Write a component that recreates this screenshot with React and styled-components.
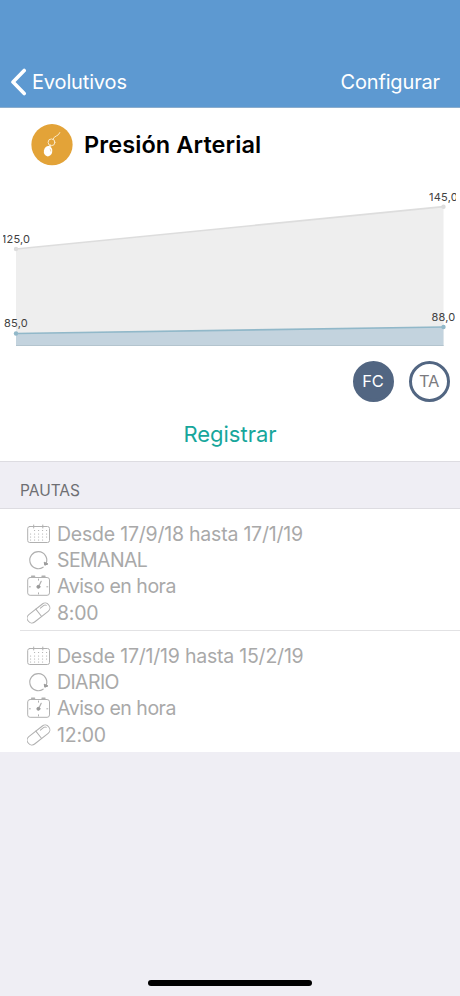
import styled, { createGlobalStyle } from 'styled-components';

const GlobalStyle = createGlobalStyle`
  * {
    box-sizing: border-box;
  }

  body {
    margin: 0;
    background: #efeef4;
    font-family: Inter, Roboto, "Liberation Sans", sans-serif;
  }

  svg {
    display: block;
    flex-shrink: 0;
  }
`;

const Screen = styled.div`
  width: 460px;
  height: 996px;
  display: flex;
  flex-direction: column;
  overflow: hidden;
  background: #efeef4;
`;

const NavBar = styled.header`
  height: 108px;
  padding: 56px 20px 0 10px;
  display: flex;
  justify-content: space-between;
  align-items: center;
  flex-shrink: 0;
  background: #5d99d1;
  border-bottom: 1px solid #8badcd;
`;

const NavButton = styled.button`
  display: flex;
  align-items: center;
  gap: 5px;
  padding: 0;
  border: 0;
  background: none;
  color: #fff;
  font: inherit;
  font-size: 20px;
  line-height: 26px;
  letter-spacing: -0.15px;
`;

const Panel = styled.section`
  height: 353px;
  flex-shrink: 0;
  display: flex;
  flex-direction: column;
  background: #fff;
`;

const Title = styled.h1`
  height: 72px;
  margin: 0;
  padding: 1px 0 0 31px;
  display: flex;
  align-items: center;
  gap: 11px;
  color: #000;
  font-size: 23.5px;
  font-weight: 600;
  letter-spacing: 0.1px;
`;

const Chart = styled.svg`
  width: 453px;
  height: 170px;
  margin-left: 3px;
  overflow: hidden;

  text {
    fill: #414141;
    font-size: 11px;
    letter-spacing: 0.2px;
    text-anchor: middle;
  }
`;

const Filters = styled.div`
  display: flex;
  justify-content: flex-end;
  gap: 15px;
  padding: 10.5px 10.5px 0 0;
`;

const Filter = styled.button`
  width: 41px;
  height: 41px;
  padding: 0;
  border: 3px solid #526682;
  border-radius: 50%;
  background: ${props => props.$active ? '#526682' : '#fff'};
  color: ${props => props.$active ? '#fff' : '#7b7b80'};
  font: inherit;
  font-size: 16.5px;
  letter-spacing: -0.2px;
`;

const Register = styled.button`
  margin: 17.5px auto 0;
  padding: 0;
  border: 0;
  background: none;
  color: #17a69b;
  font: inherit;
  font-size: 22px;
  line-height: 30px;
`;

const SectionHeader = styled.h2`
  height: 48px;
  margin: 0;
  padding: 10px 20px 0;
  display: flex;
  align-items: center;
  flex-shrink: 0;
  border-top: 1px solid #dddce1;
  border-bottom: 1px solid #dddce1;
  color: #6e6e73;
  font-size: 15.5px;
  font-weight: 400;
  letter-spacing: 0;
`;

const List = styled.ul`
  margin: 0;
  padding: 0 0 0 20px;
  list-style: none;
  background: #fff;
`;

const Item = styled.li`
  height: ${props => props.$last ? '121px' : '122px'};
  padding: 12px 0 0 7px;
  border-bottom: ${props => props.$last ? '0' : '1px solid #e2e2e4'};
`;

const Line = styled.div`
  height: 26px;
  margin-top: ${props => props.$spaced ? '1px' : '0'};
  display: flex;
  align-items: center;
  gap: 6px;
  color: #a9a9a9;
  font-size: 19.5px;
  line-height: 26px;
  letter-spacing: ${props => props.$spacing || '-0.22px'};
  white-space: nowrap;
`;

const Footer = styled.footer`
  margin-top: auto;
  height: 16px;
  display: flex;
  justify-content: center;
`;

const HomeIndicator = styled.div`
  width: 164px;
  height: 6px;
  border-radius: 3px;
  background: #000;
`;

const BackIcon = () => (
  <svg width="17" height="28" viewBox="0 0 17 28" fill="none" stroke="#fff" strokeWidth="3.6" strokeLinecap="round" strokeLinejoin="round">
    <path d="M14.2 2.5 3 14l11.2 11.5" />
  </svg>
);

const PressureIcon = () => (
  <svg width="42" height="42" viewBox="0 0 42 42">
    <circle cx="21" cy="20.7" r="20.6" fill="#e3a338" />
    <g fill="none" stroke="#fbe9c8" strokeWidth="1" strokeLinecap="round">
      <path d="M22 15.3q1-2.6 3.4-3.4 2.4-.7 3.4-3.3" />
      <circle cx="20.5" cy="18.3" r="3.4" />
      <path d="m19.4 21.5-1.6 1.8" strokeWidth="2" />
    </g>
    <ellipse cx="17.1" cy="27.2" rx="4.2" ry="5.2" fill="#fff" transform="rotate(10 17 27)" />
    <path d="M18.5 24.7q1.5.8 1.3 2.8" fill="none" stroke="#edc484" strokeWidth=".8" />
  </svg>
);

const iconProps = {
  width: 24,
  height: 24,
  viewBox: '0 0 24 24',
  fill: 'none',
  stroke: '#b0b0b0',
  strokeWidth: 1,
  strokeLinecap: 'round',
  strokeLinejoin: 'round',
};

const CalendarIcon = () => (
  <svg {...iconProps}>
    <rect x=".7" y="4.5" width="21.8" height="16" rx="2" />
    <path d="M6.7 3v3M15.8 3v3" />
    <path d="M7.5 8.5h12.2M3.5 12h16.2M3.5 15h16.2M3.5 18h12.2" strokeWidth="1.2" strokeDasharray=".1 3.9" />
  </svg>
);

const RepeatIcon = () => (
  <svg {...iconProps}>
    <path d="M16.1 19.2A8.5 8.5 0 1 1 19.2 15.3" strokeWidth="1.2" />
    <path d="m17.3 14.6.5 2.6 2.8-1.1z" fill="#999" stroke="#999" />
  </svg>
);

const AlarmIcon = () => (
  <svg {...iconProps}>
    <rect x=".7" y="3.5" width="21.8" height="17.8" rx="2.4" />
    <path d="M4.6 2.3h3M15 2.3h3" strokeWidth="1.4" />
    <path d="m11.6 12.8 2.6-5.5" strokeWidth="1.2" />
    <circle cx="11.4" cy="12.8" r="1.5" fill="#999" stroke="#999" />
    <path d="M11.5 5v1.2M11.5 18.8V20M2.4 12.8h1M19.8 12.8h1" />
  </svg>
);

const PillIcon = () => (
  <svg {...iconProps}>
    <g transform="rotate(-38 11.5 12)">
      <rect x="-1.5" y="7.3" width="26" height="9.4" rx="4.4" />
      <path d="M11.8 7.3v9.4M16 9.3h4.4q1.5 0 2 1.5" />
    </g>
  </svg>
);

const series = [
  { values: [125, 145], points: [[13, 69], [440.5, 26.7]], area: '#eee', line: '#ddd' },
  { values: [85, 88], points: [[13, 153.5], [440.5, 147]], area: '#c3d3de', line: '#91b8c9' },
];

const BASELINE = 166;

const PressureChart = () => (
  <Chart viewBox="0 0 453 170">
    {series.map(({ values, points: [start, end], area, line }) => (
      <g key={line}>
        <path d={`M${start}L${end}V${BASELINE}H${start[0]}Z`} fill={area} />
        <path d={`M${start}L${end}`} stroke={line} strokeWidth="1.7" />
        {[start, end].map(([x, y], i) => (
          <g key={x}>
            <circle cx={x} cy={y} r="2.2" fill={line} />
            <text x={x} y={y - 6.2}>{values[i]},0</text>
          </g>
        ))}
      </g>
    ))}
    <path d={`M13 ${BASELINE - 0.5}H440.5`} stroke="#b3c4ce" />
  </Chart>
);

const schedules = [
  { dates: 'Desde 17/9/18 hasta 17/1/19', frequency: 'SEMANAL', time: '8:00' },
  { dates: 'Desde 17/1/19 hasta 15/2/19', frequency: 'DIARIO', time: '12:00' },
];

const App = () => {
  return (
    <>
      <GlobalStyle />
      <Screen>
        <NavBar>
          <NavButton>
            <BackIcon />
            Evolutivos
          </NavButton>
          <NavButton>Configurar</NavButton>
        </NavBar>
        <Panel>
          <Title>
            <PressureIcon />
            Presión Arterial
          </Title>
          <PressureChart />
          <Filters>
            <Filter $active>FC</Filter>
            <Filter>TA</Filter>
          </Filters>
          <Register>Registrar</Register>
        </Panel>
        <SectionHeader>PAUTAS</SectionHeader>
        <List>
          {schedules.map((item, i) => (
            <Item key={item.dates} $last={i === schedules.length - 1}>
              <Line><CalendarIcon />{item.dates}</Line>
              <Line $spacing="-0.6px"><RepeatIcon />{item.frequency}</Line>
              <Line $spacing="-0.48px"><AlarmIcon />Aviso en hora</Line>
              <Line $spaced><PillIcon />{item.time}</Line>
            </Item>
          ))}
        </List>
        <Footer>
          <HomeIndicator />
        </Footer>
      </Screen>
    </>
  );
}

export default App;
